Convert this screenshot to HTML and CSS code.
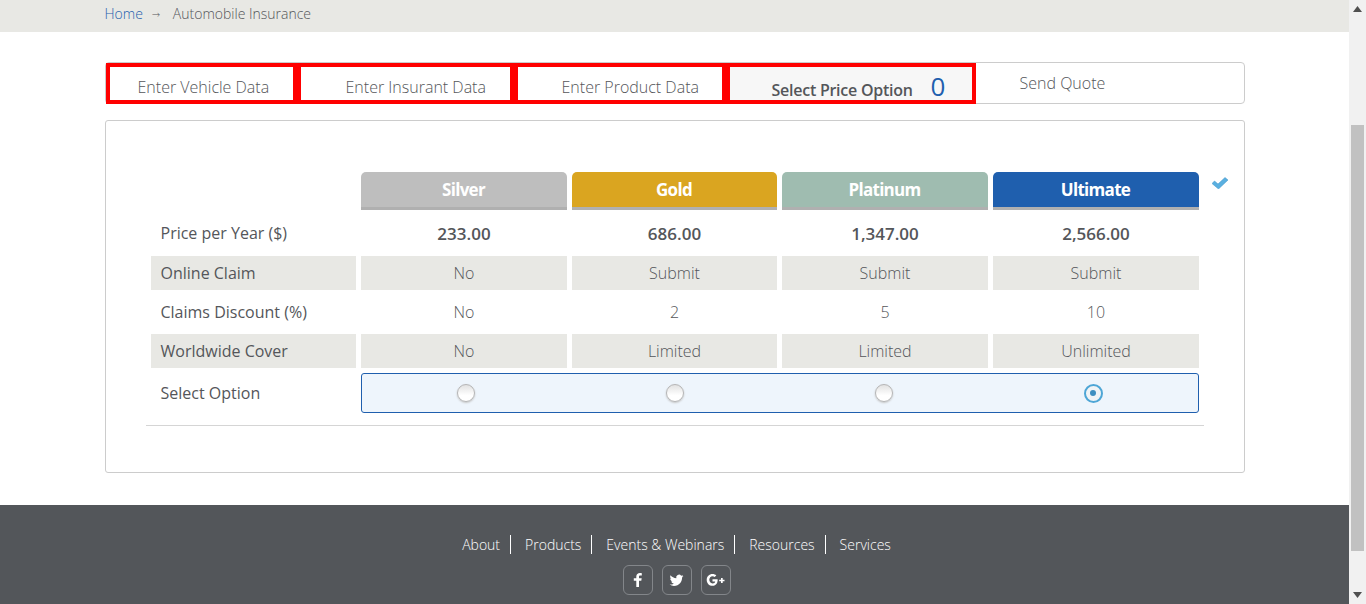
FILE: index.html
```html
<!DOCTYPE html>
<html lang="en">
<head>
    <meta charset="UTF-8">
    <title>Automobile Insurance</title>
    <link rel="stylesheet" href="styles.css">
</head>
<body>
    <div class="page">
        <div class="breadcrumb">
            <div class="container crumbs">
                <a href="#" class="crumb-home">Home</a>
                <span class="crumb-arrow">&rarr;</span>
                <span>Automobile Insurance</span>
            </div>
        </div>

        <div class="container content">
            <nav class="wizard">
                <a href="#" class="step step-1">Enter Vehicle Data</a>
                <a href="#" class="step step-2">Enter Insurant Data</a>
                <a href="#" class="step step-3">Enter Product Data</a>
                <a href="#" class="step step-4 active">Select Price Option <span class="counter">0</span></a>
                <a href="#" class="step-last">Send Quote</a>
            </nav>

            <div class="panel">
                <div class="price-table">
                    <div></div>
                    <div class="plan silver">Silver</div>
                    <div class="plan gold">Gold</div>
                    <div class="plan platinum">Platinum</div>
                    <div class="plan ultimate">Ultimate</div>
                    <svg class="tick" viewBox="0 0 16 12"><path d="M0 6.500L2.500 4 6 7 13 .5 16 3 6.500 12z"/></svg>

                    <div class="label">Price per Year ($)</div>
                    <div class="cell price">233.00</div>
                    <div class="cell price">686.00</div>
                    <div class="cell price">1,347.00</div>
                    <div class="cell price">2,566.00</div>

                    <div class="label shade">Online Claim</div>
                    <div class="cell shade">No</div>
                    <div class="cell shade">Submit</div>
                    <div class="cell shade">Submit</div>
                    <div class="cell shade">Submit</div>

                    <div class="label">Claims Discount (%)</div>
                    <div class="cell">No</div>
                    <div class="cell">2</div>
                    <div class="cell">5</div>
                    <div class="cell">10</div>

                    <div class="label shade">Worldwide Cover</div>
                    <div class="cell shade">No</div>
                    <div class="cell shade">Limited</div>
                    <div class="cell shade">Limited</div>
                    <div class="cell shade">Unlimited</div>

                    <div class="label">Select Option</div>
                    <div class="options">
                        <span class="radio"></span>
                        <span class="radio"></span>
                        <span class="radio"></span>
                        <span class="radio checked"></span>
                    </div>
                </div>
                <hr class="rule">
            </div>
        </div>

        <footer class="footer">
            <div class="footer-links">
                <a href="#">About</a>
                <a href="#">Products</a>
                <a href="#">Events &amp; Webinars</a>
                <a href="#">Resources</a>
                <a href="#">Services</a>
            </div>
            <div class="social">
                <a href="#" class="social-btn">
                    <svg width="9" height="14" viewBox="0 0 9 14"><path d="M6 14V7.800h2.300L8.700 5.200H6V3.700c0-.8.300-1.200 1.300-1.200h1.500V.2C8.500.1 7.700 0 6.900 0 4.800 0 3.300 1.300 3.300 3.500v1.700H.8v2.600h2.500V14z"/></svg>
                </a>
                <a href="#" class="social-btn">
                    <svg width="15" height="15" viewBox="0 0 24 24"><path d="M23 4.900c-.8.400-1.700.6-2.600.7.900-.6 1.600-1.400 2-2.500-.9.500-1.800.9-2.900 1.100a4.500 4.500 0 0 0-7.800 4.100C8 8.100 4.600 6.300 2.500 3.500c-1.200 2.100-.6 4.700 1.400 6-.7 0-1.400-.2-2-.6 0 2.200 1.500 4.100 3.600 4.500-.7.200-1.400.2-2 .1.600 1.800 2.300 3.100 4.300 3.100A9.200 9.200 0 0 1 1 18.500 12.900 12.900 0 0 0 8 20.600c8.400 0 13.200-7.100 12.900-13.500.9-.6 1.600-1.400 2.100-2.200z"/></svg>
                </a>
                <a href="#" class="social-btn">
                    <svg width="20" height="14" viewBox="0 0 20 14"><path d="M6.500 1c1.600 0 2.900.6 3.800 1.400L8.600 4.100C8.100 3.600 7.400 3.300 6.500 3.300 4.700 3.300 3.300 4.900 3.300 6.800s1.400 3.600 3.200 3.600c1.800 0 2.500-1 2.700-2H6.500V6.200h5.100c.4 3.100-1.300 6.600-5.100 6.600C3.200 12.800.7 10.200.7 6.900S3.200 1 6.500 1z"/><path d="M15 5h1.700v1.700h1.800v1.600h-1.800V10H15V8.300h-1.800V6.700H15z"/></svg>
                </a>
            </div>
        </footer>
    </div>

    <div class="scrollbar">
        <svg class="arrow" width="9" height="6" viewBox="0 0 9 6"><path d="M4.500 0L9 6H0z"/></svg>
        <div class="thumb"></div>
        <svg class="arrow" width="9" height="6" viewBox="0 0 9 6"><path d="M0 0h9L4.500 6z"/></svg>
    </div>
</body>
</html>
```

FILE: styles.css
```css
* {
    box-sizing: border-box;
}
html, body {
    height: 604px;
    overflow: hidden;
}
body {
    margin: 0;
    display: flex;
    font-family: "Open Sans", sans-serif;
    font-size: 16px;
    color: #54565a;
    background: #fff;
}
a {
    color: inherit;
    text-decoration: none;
}
.page {
    width: 1349px;
    flex: none;
    display: flex;
    flex-direction: column;
}
.container {
    width: 1140px;
    margin: 0 auto;
}

/* breadcrumb */
.breadcrumb {
    height: 32px;
    background: #e8e8e4;
}
.crumbs {
    display: flex;
    align-items: center;
    height: 26px;
    font-size: 14px;
    font-weight: 300;
}
.crumb-home {
    color: #1f5fae;
}
.crumb-arrow {
    font-family: "DejaVu Sans", sans-serif;
    font-size: 10px;
    width: 9px;
    margin: 2px 12px 0 9px;
}

/* wizard steps */
.content {
    padding-top: 30px;
}
.wizard {
    display: flex;
    height: 42px;
    border: 1px solid #ccc;
    border-radius: 4px;
    font-weight: 300;
}
.step {
    border: 4px solid #f00;
    height: 41px;
    padding-top: 9px;
    white-space: nowrap;
}
.step-1 {
    width: 191px;
    padding-left: 28px;
}
.step-2 {
    width: 217px;
    padding-left: 45px;
}
.step-3 {
    width: 212px;
    padding-left: 44px;
}
.step-4 {
    width: 250px;
    padding-left: 42px;
    background: #f7f7f7;
    font-weight: 600;
    letter-spacing: -0.25px;
}
.counter {
    font-size: 26px;
    font-weight: 400;
    line-height: 20px;
    color: #1f5fae;
    margin-left: 14px;
}
.step-last {
    padding: 9px 0 0 44px;
}

/* price table */
.panel {
    height: 353px;
    margin-top: 16px;
    border: 1px solid #ccc;
    border-radius: 3px;
    padding: 51px 40px 0 39px;
}
.price-table {
    display: grid;
    grid-template-columns: 205px 206px 205px 206px 206px;
    grid-template-rows: 38px 36px 34px 34px 34px 40px;
    gap: 5px;
    margin-left: 6px;
    position: relative;
}
.plan {
    display: flex;
    align-items: center;
    justify-content: center;
    border-bottom: 3px solid #b0b0b0;
    border-radius: 5px 5px 0 0;
    font-size: 17px;
    font-weight: 700;
    color: #fff;
    letter-spacing: -0.7px;
}
.silver {
    background: #bebebe;
}
.gold {
    background: #daa520;
}
.platinum {
    background: #9fbcb0;
}
.ultimate {
    background: #1f5fae;
}
.tick {
    position: absolute;
    left: 1061px;
    top: 5px;
    width: 16px;
    height: 12px;
    fill: #5ab0e0;
    stroke: #3f93c8;
    stroke-width: 0.5;
}
.label {
    display: flex;
    align-items: center;
    padding-left: 10px;
}
.cell {
    display: flex;
    align-items: center;
    justify-content: center;
    padding-left: 1px;
    font-weight: 300;
}
.price {
    font-size: 17px;
    font-weight: 600;
}
.shade {
    background: #e8e8e4;
}
.options {
    grid-column: 2 / 6;
    display: grid;
    grid-template-columns: repeat(4, 1fr);
    align-items: center;
    justify-items: center;
    background: #eef5fc;
    border: 1px solid #1f5fae;
    border-radius: 3px;
}
.radio {
    width: 18px;
    height: 18px;
    border-radius: 50%;
    border: 1px solid #b5b5b5;
    background: linear-gradient(#e2e2e2, #fff 65%);
    box-shadow: 0 1px 2px #c4c4c4;
}
.radio.checked {
    width: 19px;
    height: 19px;
    display: flex;
    align-items: center;
    justify-content: center;
    border: 2px solid #4ea6d6;
    background: #f1f4f6;
    box-shadow: none;
}
.radio.checked::after {
    content: "";
    width: 6px;
    height: 6px;
    border-radius: 50%;
    background: #3f8fc0;
}
.rule {
    margin: 12px 0 0 1px;
    border: 0;
    border-top: 1px solid #d5d5d5;
}

/* footer */
.footer {
    margin-top: 32px;
    flex: 1;
    background: #53565a;
    color: #fff;
    font-size: 14px;
    font-weight: 300;
    padding-top: 30px;
}
.footer-links {
    display: flex;
    justify-content: center;
    height: 19px;
    line-height: 19px;
}
.footer-links a {
    padding: 0 10px 0 14px;
    border-right: 1px solid #fff;
}
.footer-links a:last-child {
    border-right: 0;
}
.social {
    display: flex;
    justify-content: center;
    gap: 9px;
    margin-top: 11px;
    padding-left: 4px;
}
.social-btn {
    width: 30px;
    height: 30px;
    border: 1px solid #83868a;
    border-radius: 6px;
    display: flex;
    align-items: center;
    justify-content: center;
}
.social-btn svg {
    fill: #fff;
}

/* fake browser scrollbar, the page was shot scrolled down a bit */
.scrollbar {
    width: 17px;
    flex: none;
    background: #f1f1f1;
    display: flex;
    flex-direction: column;
    align-items: center;
    padding: 6px 0;
}
.arrow {
    fill: #505050;
    flex: none;
}
.thumb {
    width: 13px;
    height: 426px;
    background: #c1c1c1;
    margin: 113px 0 auto;
}
```
